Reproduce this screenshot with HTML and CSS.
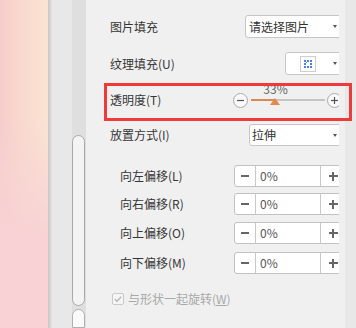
FILE: index.html
```html
<!DOCTYPE html>
<html>
<head>
<meta charset="utf-8">
<link rel="stylesheet" href="styles.css">
</head>
<body>
<div class="app">
  <div class="canvas"></div>
  <div class="shade"></div>
  <div class="gutter"></div>
  <div class="track">
    <div class="thumb"></div>
    <div class="thumb2"></div>
  </div>
  <div class="panel">
    <div class="content">
      <div class="rows">
        <div class="row r1">
          <span class="label">图片填充</span>
          <div class="select w1"><span class="stext">请选择图片</span><i class="caret"></i></div>
        </div>
        <div class="row r2">
          <span class="label">纹理填充(U)</span>
          <div class="select w2">
            <svg class="tex" width="16" height="16" viewBox="0 0 16 16">
              <rect x="0.5" y="0.5" width="15" height="15" fill="#fff" stroke="#cfcfcf"/>
              <g fill="#4a84dc">
                <rect x="4" y="4" width="2" height="2"/><rect x="7" y="4" width="2" height="2"/><rect x="10" y="4" width="2" height="2"/>
                <rect x="4" y="7" width="2" height="2"/><rect x="10" y="7" width="2" height="2"/>
                <rect x="4" y="10" width="2" height="2"/><rect x="7" y="10" width="2" height="2"/><rect x="10" y="10" width="2" height="2"/>
                <rect x="6" y="6" width="1" height="1"/>
              </g>
            </svg>
            <i class="caret"></i>
          </div>
        </div>
        <div class="row r3">
          <span class="label">透明度(T)</span>
          <div class="slider">
            <span class="round">
              <svg width="15" height="15" viewBox="0 0 15 15"><circle cx="7.5" cy="7.5" r="7" fill="#fafafa" stroke="#a9a9a9"/><line x1="4" y1="7.5" x2="11" y2="7.5" stroke="#555" stroke-width="1.2"/></svg>
            </span>
            <div class="rail">
              <div class="fill" style="width:24px"></div>
              <span class="pct">33%</span>
              <span class="knob"></span>
            </div>
            <span class="round">
              <svg width="15" height="15" viewBox="0 0 15 15"><circle cx="7.5" cy="7.5" r="7" fill="#fafafa" stroke="#a9a9a9"/><line x1="4" y1="7.5" x2="11" y2="7.5" stroke="#555" stroke-width="1.2"/><line x1="7.5" y1="4" x2="7.5" y2="11" stroke="#555" stroke-width="1.2"/></svg>
            </span>
          </div>
        </div>
        <div class="row r4">
          <span class="label">放置方式(I)</span>
          <div class="select w4"><span class="stext">拉伸</span><i class="caret"></i></div>
        </div>
        <div class="row sub s1">
          <span class="label">向左偏移(L)</span>
          <div class="spin"><span class="sbtn minus"></span><span class="val">0%</span><span class="sbtn plus"></span></div>
        </div>
        <div class="row sub s2">
          <span class="label">向右偏移(R)</span>
          <div class="spin"><span class="sbtn minus"></span><span class="val">0%</span><span class="sbtn plus"></span></div>
        </div>
        <div class="row sub s3">
          <span class="label">向上偏移(O)</span>
          <div class="spin"><span class="sbtn minus"></span><span class="val">0%</span><span class="sbtn plus"></span></div>
        </div>
        <div class="row sub s4">
          <span class="label">向下偏移(M)</span>
          <div class="spin"><span class="sbtn minus"></span><span class="val">0%</span><span class="sbtn plus"></span></div>
        </div>
        <div class="row check">
          <span class="cbox">
            <svg width="12" height="12" viewBox="0 0 12 12"><rect x="0.5" y="0.5" width="11" height="11" rx="1.5" fill="#f5f5f5" stroke="#cacaca"/><polyline points="2.8,6 5,8.2 9.2,3.8" fill="none" stroke="#b5b5b5" stroke-width="1.3"/></svg>
          </span>
          <span class="clabel">与形状一起旋转(<u>W</u>)</span>
        </div>
      </div>
    </div>
  </div>
  <div class="edge"></div>
  <div class="highlight"></div>
</div>
</body>
</html>
```
FILE: styles.css
```css
* { box-sizing: border-box; }
html, body { margin: 0; padding: 0; }
body {
  width: 356px;
  height: 328px;
  overflow: hidden;
  font-family: "Noto Sans CJK SC", "Microsoft YaHei", sans-serif;
  font-size: 12px;
  color: #363636;
}
.app {
  position: relative;
  display: flex;
  width: 356px;
  height: 328px;
}
.canvas {
  width: 48px;
  background:
    linear-gradient(to bottom, rgba(248,210,212,0) 0%, rgba(248,210,212,0) 35%, #f8d2d4 72%),
    linear-gradient(to right, #f6cdcb 0%, #f9dacf 50%, #fbe4d3 100%);
}
.shade {
  width: 4px;
  background: linear-gradient(to right, #cbc4c1, #e3e3e3);
}
.gutter {
  width: 20px;
  background: #e8e8e8;
}
.track {
  width: 14px;
  background: #dfdfdf;
  display: flex;
  flex-direction: column;
  padding-top: 135px;
}
.thumb {
  width: 13px;
  height: 184px;
  background: #f4f4f4;
  border: 1px solid #a9a9a9;
  border-radius: 7px;
}
.thumb2 {
  margin-top: 3px;
  width: 13px;
  height: 20px;
  background: #fafafa;
  border: 1px solid #b0b0b0;
  border-radius: 7px 7px 0 0;
}
.panel {
  width: 259px;
  background: #f0f0f0;
}
.content {
  width: 253px;
  height: 328px;
  overflow: hidden;
}
.rows {
  width: 259px;
  padding: 15px 0 0 24px;
  display: flex;
  flex-direction: column;
}
.edge {
  width: 11px;
  background: #e8e8e8;
}
.row {
  display: flex;
  align-items: center;
}
.label {
  flex: 1;
  line-height: 16px;
  white-space: nowrap;
}
.sub { padding-left: 10px; }
.r1 { height: 23px; }
.r2 { height: 23px; margin-top: 14px; }
.r3 { height: 28px; margin-top: 11px; }
.r4 { height: 22px; margin-top: 10px; }
.s1 { height: 22px; margin-top: 19px; }
.s2 { height: 22px; margin-top: 6px; }
.s3 { height: 22px; margin-top: 7px; }
.s4 { height: 22px; margin-top: 8px; }
.check { height: 12px; margin-top: 19px; padding-left: 2px; }

.select {
  height: 100%;
  display: flex;
  align-items: center;
  background: #fff;
  border: 1px solid #c6c6c6;
  border-radius: 3px;
  padding-left: 3px;
}
.w1 { width: 100px; }
.w2 { width: 60px; padding-left: 14px; }
.w4 { width: 96px; padding-left: 2px; }
.stext { line-height: 16px; color: #333; white-space: nowrap; }
.tex { display: block; }
.caret {
  margin-left: auto;
  margin-right: 7px;
  width: 0;
  height: 0;
  border-left: 2px solid transparent;
  border-right: 2px solid transparent;
  border-top: 3px solid #555;
}

.slider {
  width: 112px;
  display: flex;
  align-items: center;
  padding-right: 3px;
}
.round { display: block; width: 15px; height: 15px; }
.round svg { display: block; }
.rail {
  position: relative;
  width: 74px;
  height: 2px;
  margin: 0 2px 0 3px;
  background: #c4c4c4;
}
.fill {
  height: 2px;
  background: #d98a52;
}
.knob {
  position: absolute;
  left: 19px;
  top: -1px;
  width: 0;
  height: 0;
  border-left: 5px solid transparent;
  border-right: 5px solid transparent;
  border-bottom: 7px solid #e08a4e;
}
.pct {
  position: absolute;
  left: 9px;
  top: -17px;
  width: 31px;
  text-align: center;
  line-height: 14px;
  color: #666;
}

.spin {
  width: 111px;
  height: 100%;
  display: flex;
  background: #fff;
  border: 1px solid #c2c2c2;
  border-radius: 3px;
}
.sbtn {
  position: relative;
  display: flex;
  align-items: center;
  justify-content: center;
}
.minus {
  width: 21px;
  border-right: 1px solid #c8c8c8;
}
.minus::before {
  content: "";
  width: 8px;
  height: 2px;
  background: #666;
}
.plus {
  flex: 1;
}
.plus::before, .plus::after {
  content: "";
  position: absolute;
  background: #666;
}
.plus::before { width: 9px; height: 1.6px; left: 7.5px; top: 9.2px; }
.plus::after { width: 1.6px; height: 9px; left: 11.2px; top: 5.5px; }
.val {
  width: 65px;
  border-right: 1px solid #c8c8c8;
  padding-left: 4px;
  line-height: 20px;
  color: #555;
}

.cbox { display: block; width: 12px; height: 12px; }
.cbox svg { display: block; }
.clabel {
  margin-left: 4px;
  color: #a8a8a8;
  line-height: 16px;
  white-space: nowrap;
}
.clabel u { text-underline-offset: 1px; }

.highlight {
  position: absolute;
  left: 104px;
  top: 83px;
  width: 248px;
  height: 38px;
  border: 3px solid #ef3a3a;
  pointer-events: none;
}
```
